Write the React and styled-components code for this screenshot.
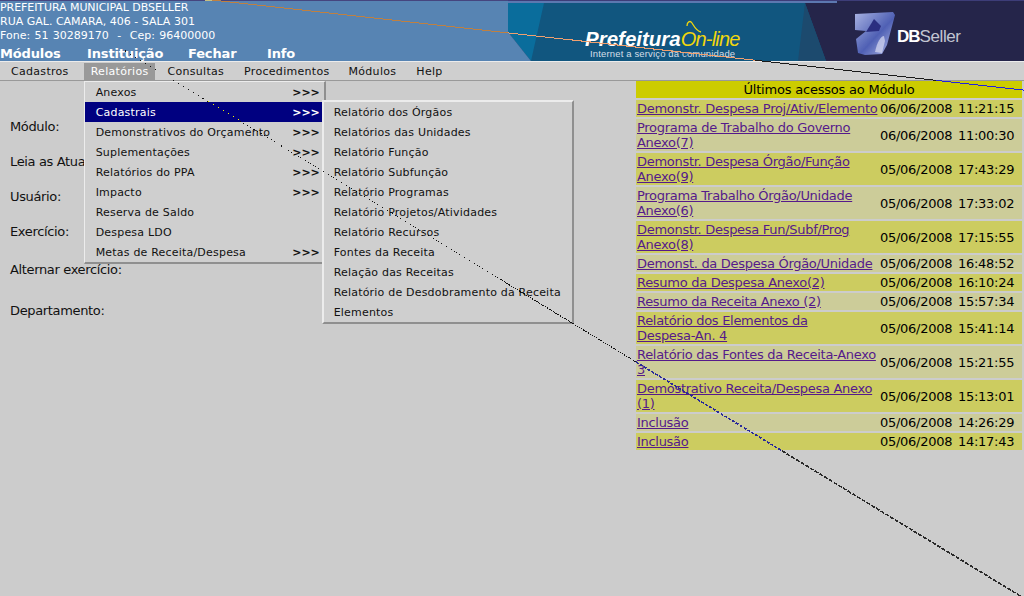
import styled, { createGlobalStyle } from "styled-components";

const GlobalStyle = createGlobalStyle`
  html, body {
    margin: 0;
    padding: 0;
    background: #cccccc;
    overflow: hidden;
  }
  body {
    font-family: "DejaVu Sans", sans-serif;
    color: #000;
  }
`;

const Page = styled.div`
  position: relative;
  width: 1024px;
  height: 596px;
  overflow: hidden;
`;

const Header = styled.header`
  display: flex;
  height: 61px;
  background: #5784b3;
  box-shadow: inset 0 1px 0 #45457f;
`;

const HeaderLeft = styled.div`
  width: 508px;
  padding-top: 1px;
  color: #fff;
`;

const OrgLine = styled.div`
  font-size: 11px;
  line-height: 14px;
  letter-spacing: ${(p) => p.$ls ?? 0}px;
  word-spacing: ${(p) => p.$ws ?? 0}px;
  white-space: pre;
`;

const TopNav = styled.nav`
  display: flex;
  margin-top: 3px;
  font-size: 13px;
  line-height: 15px;
  font-weight: bold;
  letter-spacing: -0.15px;
`;

const TopLink = styled.span`
  width: ${(p) => p.$w}px;
`;

const Banner = styled.div`
  position: relative;
  flex: 1;
  display: flex;
  color: #fff;
`;

const BannerArt = styled.svg`
  position: absolute;
  left: 0;
  top: 0;
`;

const OnlineLogo = styled.div`
  position: absolute;
  left: 77px;
  top: 28px;
  font-family: "Liberation Sans", sans-serif;
  white-space: nowrap;
`;

const OnlineName = styled.div`
  font-size: 20.5px;
  line-height: 22px;
  font-weight: bold;
  font-style: italic;
`;

const OnlineWord = styled.span`
  font-size: 20px;
  font-weight: normal;
  letter-spacing: -0.8px;
  color: #f2d60c;
`;

const OnlineSub = styled.div`
  margin: -2px 0 0 5px;
  font-size: 9.5px;
  line-height: 11px;
  letter-spacing: 0.15px;
  color: #d4dfe8;
`;

const SellerLogo = styled.div`
  position: absolute;
  left: 389px;
  top: 27px;
  font-family: "Liberation Sans", sans-serif;
  font-size: 17px;
  line-height: 20px;
  color: #c3c5d2;
  letter-spacing: -0.4px;
`;

const SellerBold = styled.b`
  color: #fff;
  letter-spacing: -1px;
`;

const MenuBar = styled.div`
  display: flex;
  height: 20px;
  box-sizing: border-box;
  padding-left: 1px;
  background: #cfcfcf;
  border-top: 1px solid #ececec;
  border-bottom: 1px solid #999;
  font-size: 11px;
`;

const MenuItem = styled.div`
  position: relative;
  margin: 1px ${(p) => p.$mr ?? 3}px 0 3px;
  padding: 0 7px;
  line-height: 17px;
  letter-spacing: 0.3px;
  color: ${(p) => (p.$active ? "#fff" : "#111")};
  background: ${(p) => (p.$active ? "#999" : "transparent")};
`;

const Dropdown = styled.div`
  position: absolute;
  left: 0;
  top: 18px;
  width: 242px;
  box-sizing: border-box;
  background: #cfcfcf;
  border: 2px solid #8f8f8f;
  border-top: 1px solid #ececec;
  border-left: 1px solid #ececec;
  z-index: 2;
`;

const DropRow = styled.div`
  position: relative;
  display: flex;
  justify-content: space-between;
  height: 20px;
  line-height: 22px;
  padding: 0 4px 0 11px;
  font-size: 11px;
  letter-spacing: 0.2px;
  white-space: nowrap;
  color: ${(p) => (p.$active ? "#fff" : "#111")};
  background: ${(p) => (p.$active ? "#000080" : "transparent")};
`;

const Arrows = styled.span`
  font-weight: bold;
  letter-spacing: -0.1px;
  font-size: 11px;
`;

const SubMenu = styled.div`
  position: absolute;
  left: 237px;
  top: -2px;
  width: 252px;
  box-sizing: border-box;
  background: #cfcfcf;
  color: #111;
  border: 2px solid #8f8f8f;
  border-top-color: #ececec;
  border-left-color: #ececec;
  z-index: 3;
`;

const SubRow = styled.div`
  height: 20px;
  line-height: 22px;
  padding-left: 10px;
  font-size: 11px;
  letter-spacing: 0.2px;
  white-space: nowrap;
`;

const Main = styled.main`
  display: flex;
  justify-content: space-between;
  padding-right: 2px;
`;

const FormColumn = styled.div`
  display: grid;
  grid-template-rows: 35px 35px 35px 38px 41px 20px;
  padding: 28px 0 0 10px;
  font-size: 13px;
  letter-spacing: -0.35px;
  align-self: start;
`;

const FormLabel = styled.div`
  line-height: 35px;
  height: 35px;
  color: #111;
`;

const AccessPanel = styled.section`
  display: flex;
  flex-direction: column;
  gap: 2px;
  width: 386px;
  font-size: 13px;
`;

const AccessTitle = styled.div`
  height: 17px;
  line-height: 17px;
  text-align: center;
  letter-spacing: -0.2px;
  background: #cccc00;
`;

const AccessRow = styled.div`
  display: flex;
  align-items: center;
  padding: 1px;
  background: ${(p) => (p.$odd ? "#cccc99" : "#cccc60")};
`;

const AccessLink = styled.a`
  flex: 0 0 243px;
  line-height: 15px;
  letter-spacing: -0.29px;
  color: #551a8b;
  text-decoration: underline;
`;

const AccessDate = styled.span`
  line-height: 15px;
  letter-spacing: -0.27px;
  word-spacing: -1px;
  white-space: pre;
`;

const Overlay = styled.svg`
  position: absolute;
  left: 0;
  top: 0;
  pointer-events: none;
  z-index: 5;
`;

const dropItems = [
  ["Anexos", true],
  ["Cadastrais", true],
  ["Demonstrativos do Orçamento", true],
  ["Suplementações", true],
  ["Relatórios do PPA", true],
  ["Impacto", true],
  ["Reserva de Saldo", false],
  ["Despesa LDO", false],
  ["Metas de Receita/Despesa", true],
];

const subItems = [
  "Relatório dos Órgãos",
  "Relatórios das Unidades",
  "Relatório Função",
  "Relatório Subfunção",
  "Relatório Programas",
  "Relatório Projetos/Atividades",
  "Relatório Recursos",
  "Fontes da Receita",
  "Relação das Receitas",
  "Relatório de Desdobramento da Receita",
  "Elementos",
];

const accesses = [
  ["Demonstr. Despesa Proj/Ativ/Elemento", "06/06/2008  11:21:15"],
  ["Programa de Trabalho do Governo Anexo(7)", "06/06/2008  11:00:30"],
  ["Demonstr. Despesa Órgão/Função Anexo(9)", "05/06/2008  17:43:29"],
  ["Programa Trabalho Órgão/Unidade Anexo(6)", "05/06/2008  17:33:02"],
  ["Demonstr. Despesa Fun/Subf/Prog Anexo(8)", "05/06/2008  17:15:55"],
  ["Demonst. da Despesa Órgão/Unidade", "05/06/2008  16:48:52"],
  ["Resumo da Despesa Anexo(2)", "05/06/2008  16:10:24"],
  ["Resumo da Receita Anexo (2)", "05/06/2008  15:57:34"],
  ["Relatório dos Elementos da Despesa-\u2060An. 4", "05/06/2008  15:41:14"],
  ["Relatório das Fontes da Receita-Anexo 3", "05/06/2008  15:21:55"],
  ["Demostrativo Receita/Despesa Anexo (1)", "05/06/2008  15:13:01"],
  ["Inclusão", "05/06/2008  14:26:29"],
  ["Inclusão", "05/06/2008  14:17:43"],
];

const thinY = (x) => (x - 212) * 0.111;
const thinLine = [
  [212, 508, "#c08040"],
  [508, 755, "#f0a070"],
  [755, 936, "#1a1a1a"],
  [936, 1024, "#2020e0"],
];

// the dots get denser towards the bottom right, like in the screenshot
const dotY = (x) => 80 + (x - 173) * 0.609;
const dotLine = [
  [125, 156, "#111", "1 4.8", 1],
  [173, 208, "#111", "1 4.8", 1],
  [208, 240, "#f2f200", "1 4.8", 1],
  [240, 300, "#111", "1 3", 1],
  [300, 500, "#111", "1 2", 1],
  [500, 636, "#111", "1.5 1", 1],
  [636, 782, "#2a2a9a", "3 1.5", 1.6],
  [782, 1024, "#2a2a2a", "4 1.5", 1.6],
];

const BannerDrawing = () => (
  <BannerArt width="516" height="61" viewBox="0 0 516 61">
    <defs>
      <linearGradient id="cube" x1="0" y1="0" x2="1" y2="1">
        <stop offset="0" stopColor="#a9b3e2" />
        <stop offset="0.55" stopColor="#4f60b4" />
        <stop offset="1" stopColor="#b4bce8" />
      </linearGradient>
      <filter id="soft">
        <feGaussianBlur stdDeviation="0.7" />
      </filter>
    </defs>
    <rect x="0" y="0" width="516" height="1" fill="#3d3d78" />
    <rect x="0" y="1" width="329" height="2" fill="#5c78b0" />
    <rect x="329" y="1" width="187" height="2" fill="#25254a" />
    <rect x="0" y="3" width="516" height="58" fill="#25254a" />
    <polygon points="0,3 0,32 23,61 318,61 297,3" fill="#11567f" />
    <polygon points="290,61 318,61 297,3" fill="#1c4a6e" />
    <polygon points="0,3 36,3 23,61 0,32" fill="#0a6d9c" />
    <polygon points="0,32 23,61 0,61" fill="#5784b3" />
    <path d="M179 26c0-4 3-6 5-3 2 3 4 8 9 9" fill="none" stroke="#f2d60c" strokeWidth="1.3" />
    <g filter="url(#soft)">
      <path d="M347 14l38-2 2 3-8 30-5 9-17 1-7-2-2-14 10-8-11-1z" fill="url(#cube)" />
      <path d="M358 32l8-13 7 7-2 5z" fill="#2b2f80" />
      <path d="M367 52c2-10 6-16 9-16l1 5-3 12z" fill="#d8dcf2" opacity="0.7" />
    </g>
  </BannerArt>
);

const ScribbleLines = () => (
  <Overlay width="1024" height="596" viewBox="0 0 1024 596" shapeRendering="crispEdges">
    <rect x="205" y="0" width="8" height="1" fill="#c8c080" />
    {thinLine.map(([a, b, color]) => (
      <line key={a} x1={a} y1={thinY(a)} x2={b} y2={thinY(b)} stroke={color} strokeWidth="1" />
    ))}
    {dotLine.map(([a, b, color, dash, width]) => (
      <line
        key={a}
        x1={a}
        y1={dotY(a)}
        x2={b}
        y2={dotY(b)}
        stroke={color}
        strokeWidth={width}
        strokeDasharray={dash}
      />
    ))}
  </Overlay>
);

export default function App() {
  return (
    <Page>
      <GlobalStyle />
      <Header>
        <HeaderLeft>
          <OrgLine $ls={-0.07}>PREFEITURA MUNICIPAL DBSELLER</OrgLine>
          <OrgLine>RUA GAL. CAMARA, 406 - SALA 301</OrgLine>
          <OrgLine $ws={0.8}>Fone: 51 30289170  -  Cep: 96400000</OrgLine>
          <TopNav>
            <TopLink $w={87}>Módulos</TopLink>
            <TopLink $w={101}>Instituição</TopLink>
            <TopLink $w={79}>Fechar</TopLink>
            <TopLink $w={40}>Info</TopLink>
          </TopNav>
        </HeaderLeft>
        <Banner>
          <BannerDrawing />
          <OnlineLogo>
            <OnlineName>
              Prefeitura<OnlineWord>On-line</OnlineWord>
            </OnlineName>
            <OnlineSub>Internet a serviço da comunidade</OnlineSub>
          </OnlineLogo>
          <SellerLogo>
            <SellerBold>DB</SellerBold>Seller
          </SellerLogo>
        </Banner>
      </Header>
      <MenuBar>
        <MenuItem $mr={5}>Cadastros</MenuItem>
        <MenuItem $active $mr={2}>
          Relatórios
          <Dropdown>
            {dropItems.map(([label, hasSub]) => (
              <DropRow key={label} $active={label === "Cadastrais"}>
                {label}
                {hasSub && <Arrows>&gt;&gt;&gt;</Arrows>}
                {label === "Cadastrais" && (
                  <SubMenu>
                    {subItems.map((item) => (
                      <SubRow key={item}>{item}</SubRow>
                    ))}
                  </SubMenu>
                )}
              </DropRow>
            ))}
          </Dropdown>
        </MenuItem>
        <MenuItem>Consultas</MenuItem>
        <MenuItem $mr={2}>Procedimentos</MenuItem>
        <MenuItem>Módulos</MenuItem>
        <MenuItem>Help</MenuItem>
      </MenuBar>
      <Main>
        <FormColumn>
          <FormLabel>Módulo:</FormLabel>
          <FormLabel>Leia as Atualizações:</FormLabel>
          <FormLabel>Usuário:</FormLabel>
          <FormLabel>Exercício:</FormLabel>
          <FormLabel>Alternar exercício:</FormLabel>
          <FormLabel>Departamento:</FormLabel>
        </FormColumn>
        <AccessPanel>
          <AccessTitle>Últimos acessos ao Módulo</AccessTitle>
          {accesses.map(([name, date], i) => (
            <AccessRow key={name + date} $odd={i % 2 === 1}>
              <AccessLink>{name}</AccessLink>
              <AccessDate>{date}</AccessDate>
            </AccessRow>
          ))}
        </AccessPanel>
      </Main>
      <ScribbleLines />
    </Page>
  );
}
